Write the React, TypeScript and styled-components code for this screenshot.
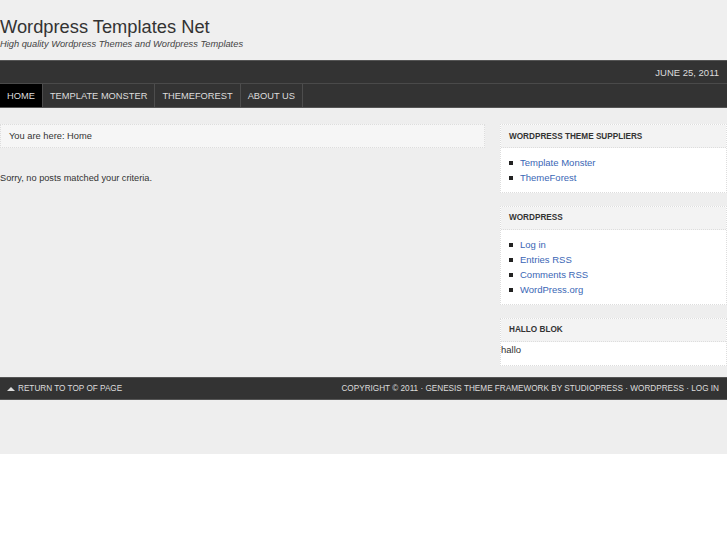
import React from "react";
import styled, { createGlobalStyle } from "styled-components";

const Global = createGlobalStyle`
  html, body { margin: 0; padding: 0; background: #fff; }
  body { font-family: "Liberation Sans", Arial, sans-serif; color: #333; }
  * { box-sizing: border-box; }
`;

const Page = styled.div`
  background: #eeeeee;
  padding-bottom: 54px;
`;

const Header = styled.header`
  height: 60px;
  background: #efefef;
  padding-top: 16px;
`;

const Title = styled.h1`
  margin: 0;
  font-size: 18.3px;
  font-weight: normal;
  color: #333;
  line-height: 22px;
`;

const Tagline = styled.p`
  margin: 0;
  font-size: 9.3px;
  font-style: italic;
  color: #444;
  line-height: 12px;
`;

const TopBar = styled.div`
  height: 24px;
  background: #333;
  border-top: 1px solid #555;
  border-bottom: 1px solid #4a4a4a;
  display: flex;
  align-items: center;
  justify-content: flex-end;
  padding-right: 8px;
  font-size: 9.5px;
  color: #ddd;
`;

const Nav = styled.nav`
  height: 24px;
  background: #333;
  display: flex;
  border-bottom: 1px solid #555;
`;

const NavItem = styled.a<{ $active?: boolean }>`
  display: flex;
  align-items: center;
  padding: 0 7px;
  font-size: 9.3px;
  color: #ddd;
  text-decoration: none;
  background: ${(p) => (p.$active ? "#000" : "transparent")};
  border-right: 1px solid #4d4d4d;
  white-space: nowrap;
`;

const Content = styled.div`
  display: flex;
  justify-content: space-between;
  align-items: flex-start;
  padding-top: 16px;
  min-height: 269px;
`;

const Main = styled.main`
  width: 485px;
`;

const Breadcrumb = styled.div`
  height: 24px;
  background: #f6f6f6;
  border: 1px dotted #ddd;
  display: flex;
  align-items: center;
  padding-left: 8px;
  font-size: 9.3px;
  color: #333;
`;

const NoPosts = styled.p`
  margin: 25px 0 0;
  font-size: 9.2px;
  color: #333;
`;

const Sidebar = styled.aside`
  width: 227px;
  display: flex;
  flex-direction: column;
  gap: 13px;
`;

const Widget = styled.section`
  background: #fff;
  border: 1px dotted #ddd;
`;

const WidgetTitle = styled.h4`
  margin: 0;
  height: 23px;
  background: #f3f3f3;
  border-bottom: 1px dotted #ddd;
  display: flex;
  align-items: center;
  padding-left: 8px;
  font-size: 8.2px;
  font-weight: bold;
  text-transform: uppercase;
  color: #333;
`;

const List = styled.ul`
  margin: 0;
  padding: 7px 0 6px 19px;
  list-style: none;
`;

const Item = styled.li`
  position: relative;
  font-size: 9.5px;
  line-height: 15.3px;
  &::before {
    content: "";
    position: absolute;
    left: -11px;
    top: 6px;
    width: 4px;
    height: 4px;
    background: #222;
  }
`;

const Link = styled.a`
  color: #3a66b5;
  text-decoration: none;
`;

const WidgetText = styled.div`
  font-size: 9.5px;
  padding: 2px 0 10px;
  color: #333;
`;

const Footer = styled.footer`
  height: 23px;
  background: #333;
  border-top: 1px solid #555;
  border-bottom: 1px solid #555;
  display: flex;
  align-items: center;
  justify-content: space-between;
  padding: 0 8px 0 7px;
  font-size: 8.2px;
  color: #ddd;
  text-transform: uppercase;
`;

const TopLink = styled.span`
  display: flex;
  align-items: center;
  gap: 3px;
`;

const Arrow = styled.span`
  width: 0;
  height: 0;
  border-left: 4px solid transparent;
  border-right: 4px solid transparent;
  border-bottom: 4px solid #ddd;
`;

export default function App() {
  return (
    <>
      <Global />
      <Page>
        <Header>
          <Title>Wordpress Templates Net</Title>
          <Tagline>High quality Wordpress Themes and Wordpress Templates</Tagline>
        </Header>
        <TopBar>JUNE 25, 2011</TopBar>
        <Nav>
          <NavItem $active>HOME</NavItem>
          <NavItem>TEMPLATE MONSTER</NavItem>
          <NavItem>THEMEFOREST</NavItem>
          <NavItem>ABOUT US</NavItem>
        </Nav>
        <Content>
          <Main>
            <Breadcrumb>You are here: Home</Breadcrumb>
            <NoPosts>Sorry, no posts matched your criteria.</NoPosts>
          </Main>
          <Sidebar>
            <Widget>
              <WidgetTitle>Wordpress Theme Suppliers</WidgetTitle>
              <List>
                <Item><Link>Template Monster</Link></Item>
                <Item><Link>ThemeForest</Link></Item>
              </List>
            </Widget>
            <Widget>
              <WidgetTitle>WordPress</WidgetTitle>
              <List>
                <Item><Link>Log in</Link></Item>
                <Item><Link>Entries RSS</Link></Item>
                <Item><Link>Comments RSS</Link></Item>
                <Item><Link>WordPress.org</Link></Item>
              </List>
            </Widget>
            <Widget>
              <WidgetTitle>Hallo Blok</WidgetTitle>
              <WidgetText>hallo</WidgetText>
            </Widget>
          </Sidebar>
        </Content>
        <Footer>
          <TopLink><Arrow />Return to top of page</TopLink>
          <span>Copyright © 2011 · Genesis Theme Framework by StudioPress · WordPress · Log in</span>
        </Footer>
      </Page>
    </>
  );
}
